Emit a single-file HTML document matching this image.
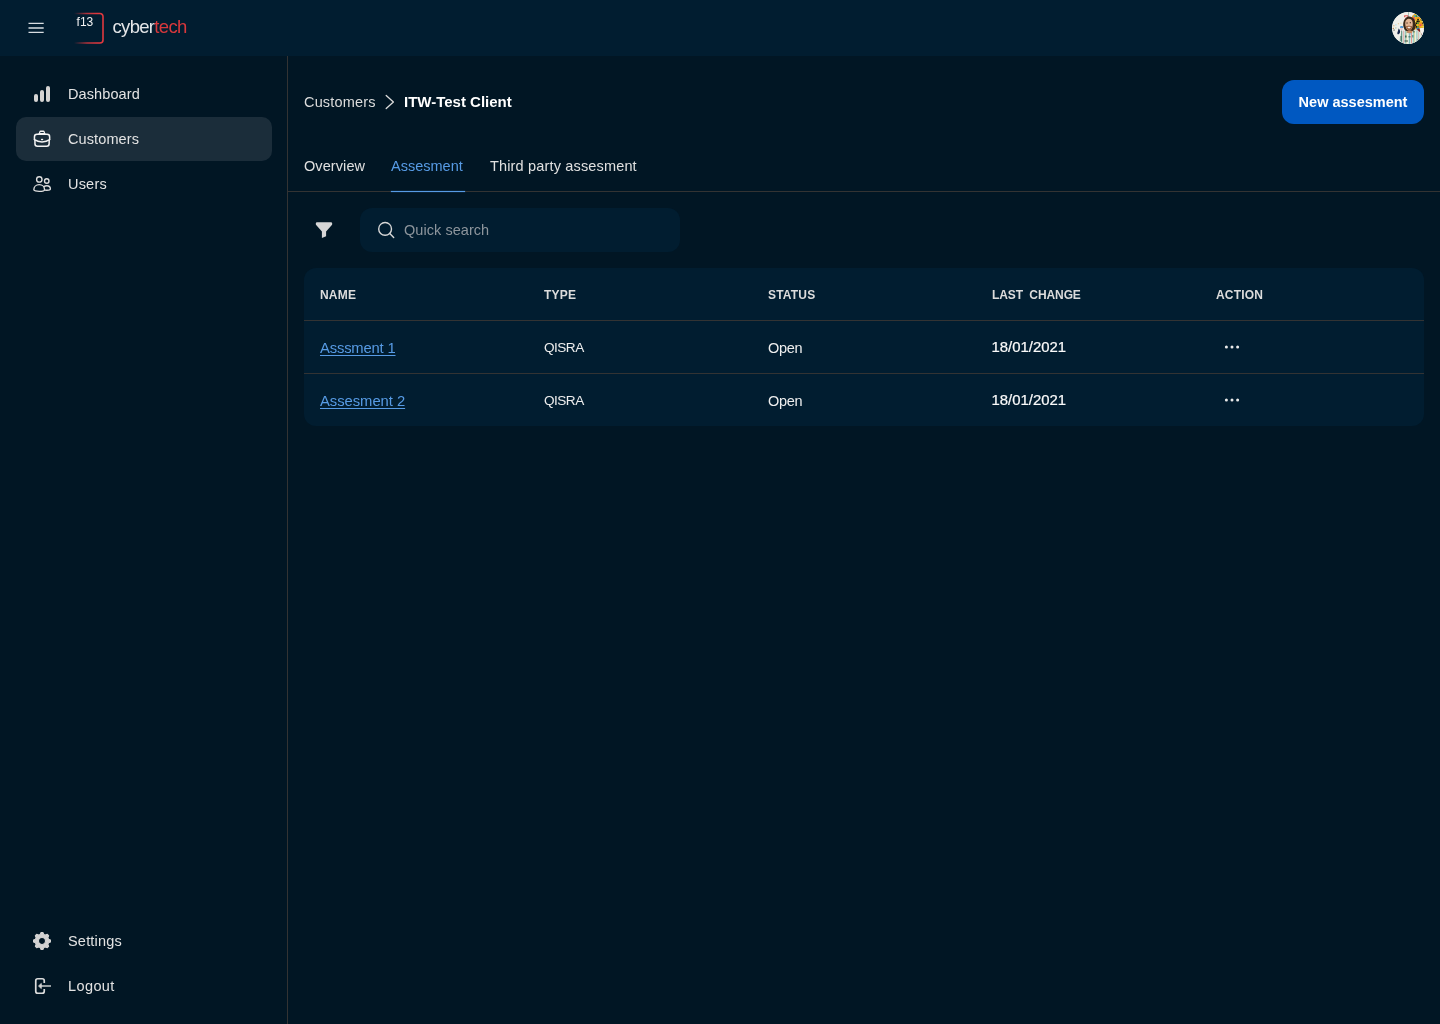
<!DOCTYPE html>
<html lang="en">
<head>
<meta charset="utf-8">
<title>ITW-Test Client – Assesment</title>
<style>
*{box-sizing:border-box;margin:0;padding:0}
html,body{width:1440px;height:1024px;overflow:hidden}
body{background:#011624;color:#e6e6e6;font-family:"Liberation Sans",sans-serif;font-size:15px;position:relative}
.abs{position:absolute}
body>*{will-change:transform}
.t{position:absolute;white-space:nowrap;line-height:20px;height:20px}
header{position:absolute;left:0;top:0;width:1440px;height:56px;background:#011d30}
.side{position:absolute;left:0;top:56px;width:288px;height:968px;border-right:1px solid #333}
.nav{position:absolute;left:16px;width:256px;height:44px;border-radius:10px}
.nav.on{background:#1b2d3a}
.nav span{position:absolute;left:52px;top:12px;line-height:20px;font-size:14.5px;color:#e3e3e3;letter-spacing:.1px;white-space:nowrap}
.nav svg{position:absolute;left:14px;top:10px;width:24px;height:24px}
.btn{position:absolute;left:1282px;top:80px;width:142px;height:44px;border-radius:12px;background:#0058c1;color:#fff;font-weight:bold;font-size:14.5px;line-height:44px;text-align:center}
.tabline{position:absolute;left:288px;top:191px;width:1152px;height:1px;background:#333}
.search{position:absolute;left:360px;top:208px;width:320px;height:44px;border-radius:12px;background:#011d30}
.table{position:absolute;left:304px;top:268px;width:1120px;height:158px;border-radius:12px;background:#011d30}
.hr{position:absolute;left:0;width:1120px;height:1px;background:#333}
.th{position:absolute;top:17px;font-size:12px;font-weight:bold;line-height:20px;color:#dcdcdc;letter-spacing:.2px;white-space:nowrap}
.td{position:absolute;font-size:14.5px;line-height:20px;color:#eee;white-space:nowrap}
a.lnk{color:#579be5;text-decoration:underline;text-underline-offset:2px;text-decoration-thickness:1.2px;font-size:14.8px;letter-spacing:-.18px}
</style>
</head>
<body>
<header>
  <svg class="abs" style="left:24px;top:16px" width="24" height="24" viewBox="0 0 24 24" fill="none" stroke="#d8dde1" stroke-width="1.300"><path d="M4.500 7.400h15.200M4.500 12h15.200M4.500 16.400h15.200"/></svg>
  <svg class="abs" style="left:72px;top:11px" width="34" height="34" viewBox="0 0 34 34" fill="none">
    <defs><linearGradient id="lg" x1="0" y1="0" x2="1" y2="0"><stop offset="0" stop-color="#e0383e" stop-opacity="0"/><stop offset=".45" stop-color="#e0383e" stop-opacity=".8"/><stop offset=".8" stop-color="#e0383e"/></linearGradient></defs>
    <path d="M2 2.5H28a3 3 0 0 1 3 3V29a3 3 0 0 1-3 3H2" stroke="url(#lg)" stroke-width="1.6"/>
    <text x="4.600" y="14.900" font-family="Liberation Sans, sans-serif" font-size="12" fill="#f2f2f2">f13</text>
  </svg>
  <div class="t" style="left:112.500px;top:17px;font-size:18.500px;color:#e4e6e8;letter-spacing:-.68px">cyber<span style="color:#d9383c">tech</span></div>
  <div class="abs" id="avatar" style="left:1392px;top:12px;width:32px;height:32px;border-radius:50%;background:#e8e8e4;overflow:hidden"><svg width="32" height="32" viewBox="0 0 32 32" style="display:block"><defs><clipPath id="av"><circle cx="16" cy="16" r="16"/></clipPath></defs><g clip-path="url(#av)"><rect width="32" height="32" fill="#f1f0ea"/><rect x="16" y="0" width=".9" height="5" fill="#9fb4ab"/><rect x="12.100" y="3.200" width="4.100" height="2" rx=".5" fill="#df534b"/><rect x="13.300" y="3.900" width="2.200" height=".9" fill="#f4e4e0"/><rect x="1.2" y="13.2" width="1.300" height="1.100" rx=".4" fill="#d9a45c"/><rect x="0.6" y="15.8" width="1.300" height="1.100" rx=".4" fill="#b8742c"/><rect x="3.2" y="15.4" width="1.300" height="1.100" rx=".4" fill="#8db58a"/><rect x="1.4" y="17.5" width="1.300" height="1.100" rx=".4" fill="#2a2a22"/><rect x="5.8" y="11.2" width="1.300" height="1.100" rx=".4" fill="#e2c48a"/><rect x="3.3" y="12.3" width="1.300" height="1.100" rx=".4" fill="#9fd0e0"/><rect x="8.3" y="10.6" width="1.300" height="1.100" rx=".4" fill="#ecd9a8"/><path d="M8 14.600c1-.9 2.600-.9 3.300-.1l-.4 1.600H8.300z" fill="#3c8fd6"/><path d="M6.600 16.400c1.200 1 1.800 2.600 1.400 4.100-.4 1.300-1.400 2-2.300 1.800-.7-.6-.3-2 .2-3 .3-1 .3-2 .7-2.900z" fill="#16264a"/><rect x="8.300" y="15.800" width="2.300" height="2.700" rx="1" fill="#e9c9c9"/><path d="M20 4l3-2.500 6.500 4.500 3 6v5.500h-11l-1.800-4z" fill="#e0a52a"/><rect x="22.8" y="1.5" width="1.500" height="1.600" fill="#f2c21a"/><rect x="24.5" y="1.5" width="1.500" height="1.600" fill="#35a7e6"/><rect x="26.2" y="1.5" width="1.500" height="1.600" fill="#f2c21a"/><rect x="27.9" y="1.5" width="1.500" height="1.600" fill="#1e7ad6"/><rect x="29.6" y="1.5" width="1.500" height="1.600" fill="#35a7e6"/><rect x="31.3" y="1.5" width="1.500" height="1.600" fill="#f2c21a"/><rect x="21.9" y="3.3" width="1.500" height="1.600" fill="#35a7e6"/><rect x="23.6" y="3.3" width="1.500" height="1.600" fill="#2f9a3c"/><rect x="25.3" y="3.3" width="1.500" height="1.600" fill="#35a7e6"/><rect x="27.0" y="3.3" width="1.500" height="1.600" fill="#35a7e6"/><rect x="28.7" y="3.3" width="1.500" height="1.600" fill="#35a7e6"/><rect x="30.4" y="3.3" width="1.500" height="1.600" fill="#f2c21a"/><rect x="32.1" y="3.3" width="1.500" height="1.600" fill="#1e7ad6"/><rect x="21.1" y="5.1" width="1.500" height="1.600" fill="#e8407a"/><rect x="22.8" y="5.1" width="1.500" height="1.600" fill="#f2c21a"/><rect x="24.5" y="5.1" width="1.500" height="1.600" fill="#f2a01c"/><rect x="26.2" y="5.1" width="1.500" height="1.600" fill="#f08a1c"/><rect x="27.9" y="5.1" width="1.500" height="1.600" fill="#f2c21a"/><rect x="29.6" y="5.1" width="1.500" height="1.600" fill="#f2c21a"/><rect x="31.3" y="5.1" width="1.500" height="1.600" fill="#1e7ad6"/><rect x="20.2" y="6.9" width="1.500" height="1.600" fill="#1e7ad6"/><rect x="21.9" y="6.9" width="1.500" height="1.600" fill="#e8407a"/><rect x="23.6" y="6.9" width="1.500" height="1.600" fill="#f2c21a"/><rect x="25.3" y="6.9" width="1.500" height="1.600" fill="#111111"/><rect x="27.0" y="6.9" width="1.500" height="1.600" fill="#f6d02a"/><rect x="28.7" y="6.9" width="1.500" height="1.600" fill="#111111"/><rect x="30.4" y="6.9" width="1.500" height="1.600" fill="#e8407a"/><rect x="32.1" y="6.9" width="1.500" height="1.600" fill="#1e7ad6"/><rect x="19.4" y="8.7" width="1.500" height="1.600" fill="#f2a01c"/><rect x="21.1" y="8.7" width="1.500" height="1.600" fill="#1e7ad6"/><rect x="22.8" y="8.7" width="1.500" height="1.600" fill="#f6e04a"/><rect x="24.5" y="8.7" width="1.500" height="1.600" fill="#111111"/><rect x="26.2" y="8.7" width="1.500" height="1.600" fill="#111111"/><rect x="27.9" y="8.7" width="1.500" height="1.600" fill="#f2c21a"/><rect x="29.6" y="8.7" width="1.500" height="1.600" fill="#f6e04a"/><rect x="31.3" y="8.7" width="1.500" height="1.600" fill="#f08a1c"/><rect x="20.2" y="10.5" width="1.500" height="1.600" fill="#111111"/><rect x="21.9" y="10.5" width="1.500" height="1.600" fill="#f6e04a"/><rect x="23.6" y="10.5" width="1.500" height="1.600" fill="#111111"/><rect x="25.3" y="10.5" width="1.500" height="1.600" fill="#2f9a3c"/><rect x="27.0" y="10.5" width="1.500" height="1.600" fill="#f2a01c"/><rect x="28.7" y="10.5" width="1.500" height="1.600" fill="#f08a1c"/><rect x="30.4" y="10.5" width="1.500" height="1.600" fill="#111111"/><rect x="32.1" y="10.5" width="1.500" height="1.600" fill="#f6d02a"/><rect x="19.4" y="12.3" width="1.500" height="1.600" fill="#1e7ad6"/><rect x="21.1" y="12.3" width="1.500" height="1.600" fill="#f2a01c"/><rect x="22.8" y="12.3" width="1.500" height="1.600" fill="#111111"/><rect x="24.5" y="12.3" width="1.500" height="1.600" fill="#f2c21a"/><rect x="26.2" y="12.3" width="1.500" height="1.600" fill="#f08a1c"/><rect x="27.9" y="12.3" width="1.500" height="1.600" fill="#e8407a"/><rect x="29.6" y="12.3" width="1.500" height="1.600" fill="#f08a1c"/><rect x="31.3" y="12.3" width="1.500" height="1.600" fill="#2f9a3c"/><rect x="21.9" y="14.1" width="1.500" height="1.600" fill="#f08a1c"/><rect x="23.6" y="14.1" width="1.500" height="1.600" fill="#111111"/><rect x="25.3" y="14.1" width="1.500" height="1.600" fill="#2f9a3c"/><rect x="27.0" y="14.1" width="1.500" height="1.600" fill="#f08a1c"/><rect x="28.7" y="14.1" width="1.500" height="1.600" fill="#f2c21a"/><rect x="30.4" y="14.1" width="1.500" height="1.600" fill="#f6e04a"/><rect x="32.1" y="14.1" width="1.500" height="1.600" fill="#f2c21a"/><rect x="24.5" y="15.9" width="1.500" height="1.600" fill="#1e7ad6"/><rect x="26.2" y="15.9" width="1.500" height="1.600" fill="#1e7ad6"/><rect x="27.9" y="15.9" width="1.500" height="1.600" fill="#f2c21a"/><rect x="29.6" y="15.9" width="1.500" height="1.600" fill="#111111"/><rect x="31.3" y="15.9" width="1.500" height="1.600" fill="#2f9a3c"/><path d="M27.300 16.300l4.700-.6v7l-2.200.5z" fill="#f6f2ee"/><path d="M25 17.600l2.300-1.300 2.600 6.900-1.200.3z" fill="#7a1d1a"/><path d="M7.300 32c-.3-5 .4-9.500 2.600-12.300 2-1.500 4.300-1.900 6-1.700h5.400c2.600.1 5.300.7 6.900 2.200 1.800 2.300 2.600 6.300 2.300 11.800z" fill="#d3e4dc"/><rect x="11.4" y="18.600" width="0.7" height="14" fill="#e59a9a"/><rect x="19.0" y="18.600" width="0.75" height="14" fill="#e07f7f"/><rect x="26.1" y="18.600" width="0.6" height="14" fill="#e8a8a0"/><rect x="9.3" y="18.600" width="0.8" height="14" fill="#3f7a64"/><rect x="13.3" y="18.600" width="0.8" height="14" fill="#7fb9b0"/><rect x="15.2" y="18.600" width="0.9" height="14" fill="#f3efe2"/><rect x="17.1" y="18.600" width="0.8" height="14" fill="#6fb0aa"/><rect x="21.3" y="18.600" width="0.8" height="14" fill="#8cc4ba"/><rect x="23.3" y="18.600" width="1" height="14" fill="#f5f1e6"/><rect x="24.6" y="18.600" width="0.6" height="14" fill="#79b3a6"/><rect x="28" y="18.600" width="0.8" height="14" fill="#f0ecd8"/><rect x="14.3" y="18.600" width="0.4" height="14" fill="#e8dc7a"/><rect x="22.4" y="18.600" width="0.45" height="14" fill="#e8d36a"/><rect x="13" y="23.5" width="1.6" height="2" fill="#2f5a4a" opacity=".85"/><rect x="16.5" y="24" width="2" height="1.5" fill="#4a7a70" opacity=".85"/><rect x="20" y="23" width="1.5" height="2.5" fill="#5a8f88" opacity=".85"/><rect x="12.5" y="28.5" width="3.5" height="1" fill="#233a30" opacity=".85"/><rect x="8.5" y="24" width="1" height="5" fill="#2c5a44" opacity=".85"/><rect x="21.3" y="19" width="1.2" height="1.5" fill="#2f4a3a" opacity=".85"/><rect x="14.6" y="19.6" width="1.5" height="0.9" fill="#2a3a34" opacity=".85"/><rect x="25.3" y="27.5" width="1" height="1" fill="#1c2a22" opacity=".85"/><path d="M15.300 17.500h5l.3 2.300c-.9 1.300-2.200 1.900-2.900 1.900-1.100-.2-2.200-1-2.900-2.100z" fill="#c98a5e"/><path d="M17.800 20.800l1.600 1.100-1 .9-1.300-.8z" fill="#8fc0dc"/><path d="M11.200 13.500c-.3-3.600 1-7.200 3.800-8.600 2.600-1 5.500-.1 7 2 1.400 2.200 1.600 5.300 1.200 8.300-.2 1.700-.9 3-1.900 3.600-1 .3-2-.1-2.800-.4l-4.200.6c-1.400-.4-2.600-2.600-3.100-5.500z" fill="#3b2818"/><path d="M13.400 9.600c.5-1.700 1.700-2.700 3.200-2.900 1.700-.1 3.100.7 3.700 2.300.6 1.800.6 4.300 0 6.400-.5 1.700-1.500 2.900-2.800 3.100-1.500.1-2.900-1-3.600-2.900-.6-1.800-.9-4.100-.5-6z" fill="#e3b594"/><path d="M14 14.300c1.300-.8 4.500-.9 6.200-.1-.2 2.500-1.300 4.200-2.800 4.300-1.600 0-2.900-1.700-3.400-4.200z" fill="#9a5f3b"/><path d="M15.300 15.100c1-.5 2.700-.5 3.600 0-.3.900-1 1.300-1.800 1.300s-1.500-.4-1.800-1.300z" fill="#f3e6dc"/><rect x="14.300" y="10.600" width="1.500" height=".9" rx=".4" fill="#2a1a12"/><rect x="17.600" y="10.300" width="1.500" height=".9" rx=".4" fill="#2a1a12"/></g></svg></div>
</header>

<div class="side">
  <div class="nav" style="top:16px"><svg viewBox="0 0 24 24" fill="#d6d5d4"><rect x="4" y="12" width="4" height="8" rx="2"/><rect x="10" y="8" width="4" height="12" rx="2"/><rect x="16" y="4" width="4" height="16" rx="2"/></svg><span>Dashboard</span></div>
  <div class="nav on" style="top:61px"><svg viewBox="0 0 24 24" fill="none" stroke="#f4f4f4" stroke-width="1.5" stroke-linecap="round" stroke-linejoin="round"><path stroke-linecap="butt" d="M4.450 12.700V9.900a2.550 2.550 0 0 1 2.550-2.550h10.100a2.550 2.550 0 0 1 2.550 2.550v2.800"/><path stroke-linecap="butt" d="M4.950 13.100v3.700a2.550 2.550 0 0 0 2.550 2.550h9.100a2.550 2.550 0 0 0 2.550-2.550v-3.700"/><path stroke="none" fill="#f4f4f4" fill-rule="evenodd" d="M7.800 7C8.800 6.800 8.950 5.600 9.250 4.700C9.450 4 10 3.600 10.700 3.600h2.600c.7 0 1.250 .4 1.450 1.100c.3 .9 .45 2.100 1.450 2.300z M10.500 5.100h3a.4 .4 0 0 1 0 .8h-3a.4 .4 0 0 1 0-.8z"/><path d="M4.450 12.700c2.100 1.450 4.850 2.200 7.600 2.200s5.500-.75 7.600-2.200"/><path d="M11.600 12.500h.9"/></svg><span>Customers</span></div>
  <div class="nav" style="top:106px"><svg viewBox="0 0 24 24" fill="none" stroke="#dedede" stroke-width="1.380" stroke-linejoin="round"><circle cx="9.300" cy="7.400" r="2.700"/><circle cx="16.750" cy="9" r="2.250"/><path d="M3.850 17.700C3.850 14.900 6 12.650 9.200 12.650S14.550 14.900 14.550 17.700C14.550 18.700 12.100 19.350 9.200 19.350S3.850 18.700 3.850 17.700z"/><path d="M13.900 14.650C14.700 14.050 15.650 13.750 16.750 13.750C19 13.750 20.400 15.300 20.400 17.050C20.400 17.900 19 18.300 16.750 18.300C15.900 18.300 15.200 18.250 14.600 18.150"/></svg><span style="letter-spacing:.2px">Users</span></div>
  <div class="nav" style="top:863px"><svg viewBox="0 0 24 24"><path fill="#d2d2d2" stroke="#d2d2d2" stroke-width="1.100" stroke-linejoin="round" fill-rule="evenodd" d="M10.19 5.45L11.07 3.55L12.93 3.55L13.81 5.45L15.35 6.08L17.31 5.37L18.63 6.69L17.92 8.65L18.55 10.19L20.45 11.07L20.45 12.93L18.55 13.81L17.92 15.35L18.63 17.31L17.31 18.63L15.35 17.92L13.81 18.55L12.93 20.45L11.07 20.45L10.19 18.55L8.65 17.92L6.69 18.63L5.37 17.31L6.08 15.35L5.45 13.81L3.55 12.93L3.55 11.07L5.45 10.19L6.08 8.65L5.37 6.69L6.69 5.37L8.65 6.08z M12 8.500a3.500 3.500 0 1 0 0 7a3.500 3.500 0 1 0 0-7z"/></svg><span style="letter-spacing:.2px">Settings</span></div>
  <div class="nav" style="top:908px"><svg viewBox="0 0 24 24" fill="none" stroke-linecap="butt" stroke-linejoin="round"><path d="M14.250 9V6.750a2 2 0 0 0-2-2H7.750a2 2 0 0 0-2 2v10.500a2 2 0 0 0 2 2h4.500a2 2 0 0 0 2-2V15" stroke="#dcdcdc" stroke-width="1.700"/><path d="M21 12H10" stroke="#b0b5b8" stroke-width="1.700"/><path d="M11.300 9.400L8.500 12l2.800 2.600z" fill="#d4d4d4" stroke="#d4d4d4" stroke-width=".8"/></svg><span style="letter-spacing:.4px">Logout</span></div>
</div>

<div class="t" style="left:304px;top:92px;color:#dcdcdc;font-size:14.5px;letter-spacing:.16px">Customers</div>
<div class="t" style="left:404px;top:92px;color:#fff;font-weight:bold">ITW-Test Client</div>
<svg class="abs" style="left:378px;top:90px" width="24" height="24" viewBox="0 0 24 24" fill="none" stroke="#dcdcdc" stroke-width="1.300" stroke-linecap="round" stroke-linejoin="round"><path d="M8.200 5.500L15.400 12l-7.200 6.500"/></svg>
<div class="btn">New assesment</div>

<div class="t" style="left:304px;top:156px;color:#e0e0e0;font-size:14.5px;letter-spacing:.09px">Overview</div>
<div class="t" style="left:391px;top:156px;color:#579be5;font-size:14.5px">Assesment</div>
<div class="t" style="left:490px;top:156px;color:#e0e0e0;font-size:14.5px;letter-spacing:.16px">Third party assesment</div>
<div class="tabline"></div>
<div class="abs" style="left:391px;top:191px;width:74px;height:1px;background:#579be5;box-shadow:0 0 0 .3px rgba(87,155,229,.35)"></div>

<svg class="abs" style="left:312px;top:218px" width="24" height="24" viewBox="0 0 24 24"><path fill="#d6d6d6" d="M5.100 4.200h13.800a1.300 1.300 0 0 1 1.300 1.300v.5c0 .5-.2 .95-.55 1.300L14.100 13.400v4.900L9.900 20v-6.600L4.350 7.300C4 6.950 3.800 6.500 3.800 6v-.5a1.300 1.300 0 0 1 1.300-1.300z"/></svg>
<div class="search"><svg class="abs" style="left:14px;top:10px" width="24" height="24" viewBox="0 0 24 24" fill="none" stroke="#d8d8d8" stroke-width="1.400" stroke-linecap="round"><circle cx="11.100" cy="10.900" r="6.400"/><path d="M15.800 15.600L19.700 19.600"/></svg><div class="t" style="left:44px;top:12px;color:#8d959c;font-size:14.5px;letter-spacing:.05px">Quick search</div></div>

<div class="table">
  <div class="th" style="left:16px">NAME</div>
  <div class="th" style="left:240px">TYPE</div>
  <div class="th" style="left:464px">STATUS</div>
  <div class="th" style="left:688px;letter-spacing:-.1px;word-spacing:3.2px">LAST CHANGE</div>
  <div class="th" style="left:912px">ACTION</div>
  <div class="hr" style="top:52px"></div>
  <div class="td" style="left:16px;top:70px"><a class="lnk">Asssment 1</a></div>
  <div class="td" style="left:240px;top:70px;font-size:13.6px;letter-spacing:-.52px">QISRA</div>
  <div class="td" style="left:464px;top:70px;letter-spacing:-.3px">Open</div>
  <div class="td" style="left:687.500px;top:69px;font-size:14.9px;color:#fafafa;-webkit-text-stroke:.22px #fafafa">18/01/2021</div>
  <svg class="abs" style="left:910px;top:67px" width="36" height="24" viewBox="0 0 36 24" fill="#eaeaea"><circle cx="12.400" cy="12" r="1.500"/><circle cx="18" cy="12" r="1.500"/><circle cx="23.600" cy="12" r="1.500"/></svg>
  <div class="hr" style="top:105px"></div>
  <div class="td" style="left:16px;top:123px"><a class="lnk" style="letter-spacing:-.04px">Assesment 2</a></div>
  <div class="td" style="left:240px;top:123px;font-size:13.6px;letter-spacing:-.52px">QISRA</div>
  <div class="td" style="left:464px;top:123px;letter-spacing:-.3px">Open</div>
  <div class="td" style="left:687.500px;top:122px;font-size:14.9px;color:#fafafa;-webkit-text-stroke:.22px #fafafa">18/01/2021</div>
<svg class="abs" style="left:910px;top:120px" width="36" height="24" viewBox="0 0 36 24" fill="#eaeaea"><circle cx="12.400" cy="12" r="1.500"/><circle cx="18" cy="12" r="1.500"/><circle cx="23.600" cy="12" r="1.500"/></svg>
</div>
</body>
</html>
